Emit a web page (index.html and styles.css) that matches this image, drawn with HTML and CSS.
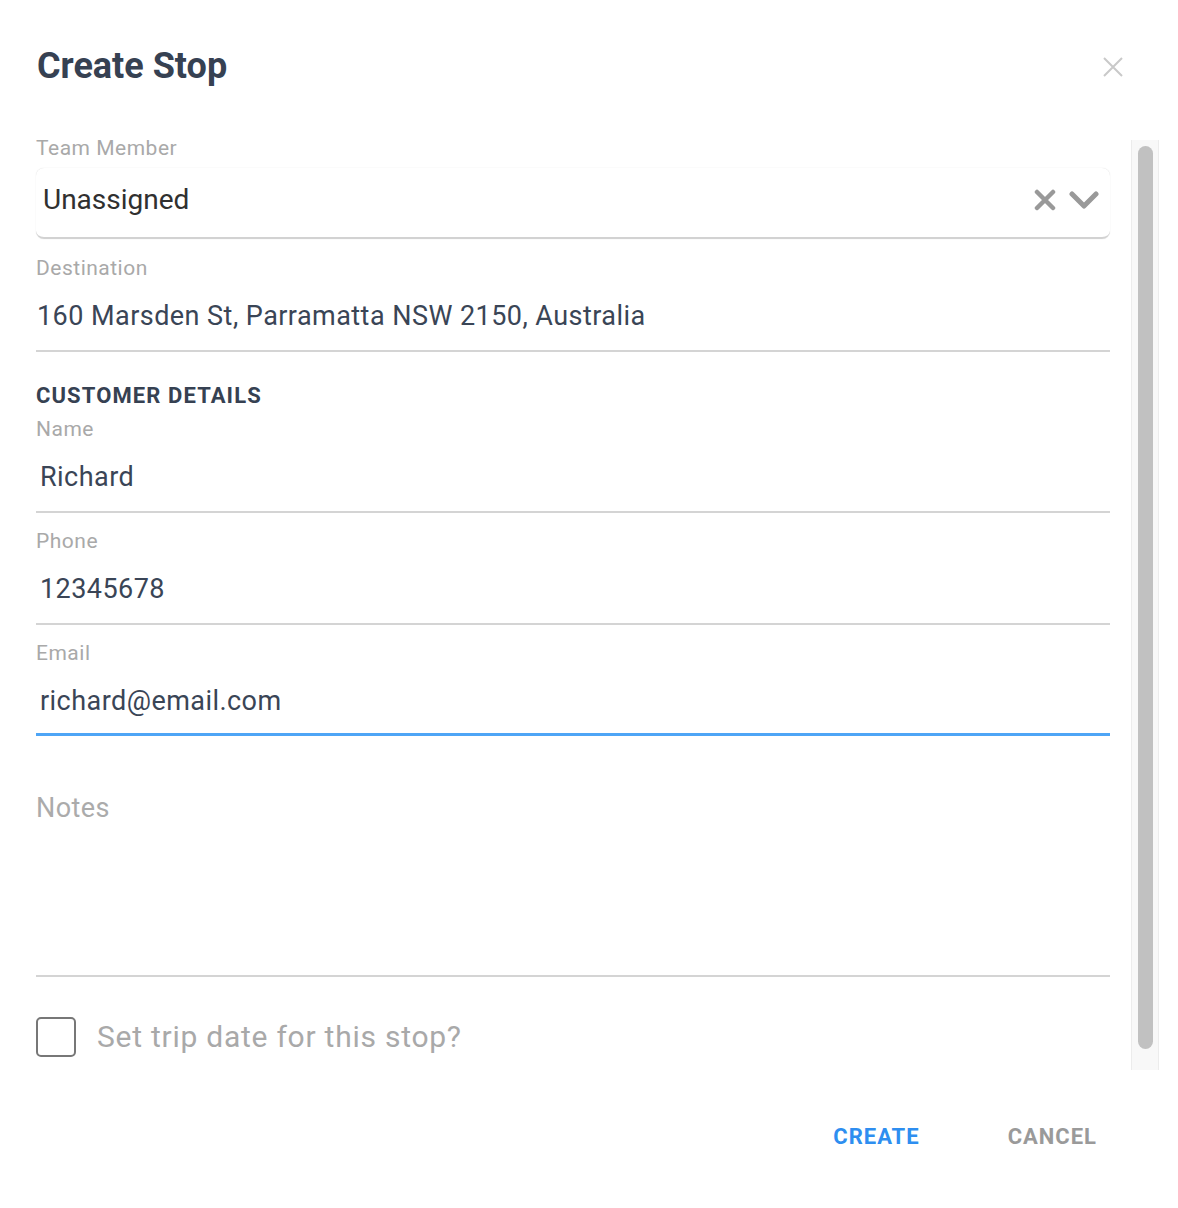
FILE: index.html
```html
<!DOCTYPE html>
<html>
<head>
<meta charset="utf-8">
<title>Create Stop</title>
<link rel="stylesheet" href="styles.css">
</head>
<body>
<div class="dialog">
  <div class="header">
    <h1 class="title">Create Stop</h1>
    <button class="close" aria-label="Close">
      <svg width="20" height="20" viewBox="0 0 20 20"><path d="M1 1 L19 19 M19 1 L1 19" stroke="#c9c9c9" stroke-width="2" fill="none"/></svg>
    </button>
  </div>
  <div class="body">
    <div class="content">
      <div class="label">Team Member</div>
      <div class="select">
        <span class="select-value">Unassigned</span>
        <span class="select-icons">
          <svg width="22" height="22" viewBox="0 0 22 22"><path d="M3 3 L19 19 M19 3 L3 19" stroke="#999" stroke-width="4.5" stroke-linecap="round" fill="none"/></svg>
          <svg width="30" height="20" viewBox="0 0 30 20"><path d="M3 4 L15 16 L27 4" stroke="#999" stroke-width="5" stroke-linecap="round" stroke-linejoin="round" fill="none"/></svg>
        </span>
      </div>

      <div class="label mt17">Destination</div>
      <div class="field dest">160 Marsden St, Parramatta NSW 2150, Australia</div>

      <div class="section">CUSTOMER DETAILS</div>
      <div class="label mt7">Name</div>
      <div class="field">Richard</div>

      <div class="label mt16">Phone</div>
      <div class="field">12345678</div>

      <div class="label mt16">Email</div>
      <div class="field focused">richard@email.com</div>

      <div class="notes">Notes</div>

      <label class="check">
        <span class="box"></span>
        <span class="check-text">Set trip date for this stop?</span>
      </label>
    </div>
    <div class="scrollbar"><div class="thumb"></div></div>
  </div>
  <div class="footer">
    <button class="btn create">CREATE</button>
    <button class="btn cancel">CANCEL</button>
  </div>
</div>
</body>
</html>
```

FILE: styles.css
```css
* { box-sizing: border-box; }
html, body { margin: 0; padding: 0; background: #fff; }
body { font-family: Roboto, "Noto Sans", Arial, sans-serif; width: 1178px; height: 1208px; overflow: hidden; }

.dialog { display: flex; flex-direction: column; height: 1208px; }

.header {
  height: 136px;
  display: flex;
  align-items: flex-start;
  justify-content: space-between;
  padding: 44px 55px 0 37px;
}
.title {
  margin: 0;
  font-size: 36px;
  line-height: 44px;
  font-weight: 700;
  color: #364152;
}
.close {
  border: 0; background: none; padding: 0; margin-top: 13px;
  width: 20px; height: 20px; display: block;
}
.close svg { display: block; }

.body {
  height: 934px;
  display: flex;
  padding-left: 36px;
  padding-right: 19px;
  gap: 21px;
}
.content { flex: 1; }

.scrollbar {
  width: 28px;
  margin-top: 4px;
  height: 930px;
  background: #f8f8f8;
  border-left: 1px solid #ececec;
  border-right: 1px solid #ececec;
  padding: 6px 5px 0 6px;
}
.thumb {
  width: 15px;
  height: 903px;
  background: #c1c1c1;
  border-radius: 8px;
}

.label {
  font-size: 21px;
  line-height: 24px;
  letter-spacing: 0.5px;
  color: #a9a9a9;
}
.mt17 { margin-top: 17px; }
.mt16 { margin-top: 16px; }
.mt7 { margin-top: 7px; }

.select {
  margin-top: 8px;
  display: flex;
  align-items: center;
  justify-content: space-between;
  padding: 14px 11px 19px 7px;
  border-radius: 8px;
  box-shadow: 0 0 1px rgba(0,0,0,0.18);
  border-bottom: 2px solid #d2d2d2;
}
.select-value {
  font-size: 28px;
  line-height: 36px;
  color: #303030;
}
.select-icons { display: flex; align-items: center; gap: 13px; }
.select-icons svg { display: block; }

.field {
  margin-top: 18px;
  font-size: 27px;
  line-height: 36px;
  letter-spacing: 0.45px;
  color: #3a4556;
  padding: 0 0 16px 4px;
  border-bottom: 2px solid #d4d4d4;
}
.field.dest { padding-left: 1px; }
.field.focused {
  padding-bottom: 14px;
  border-bottom: 3px solid #4ea5f6;
}

.section {
  margin-top: 30px;
  font-size: 22px;
  line-height: 28px;
  font-weight: 700;
  letter-spacing: 1.1px;
  color: #364152;
}

.notes {
  margin-top: 54px;
  height: 187px;
  font-size: 27px;
  line-height: 36px;
  letter-spacing: 0.4px;
  color: #ababab;
  border-bottom: 2px solid #d4d4d4;
}

.check {
  margin-top: 40px;
  display: flex;
  align-items: center;
  gap: 21px;
}
.box {
  width: 40px; height: 40px;
  border: 2px solid #777;
  border-radius: 5px;
}
.check-text {
  font-size: 30px;
  line-height: 38px;
  letter-spacing: 0.75px;
  color: #a9a9a9;
}

.footer {
  flex: 1;
  display: flex;
  justify-content: flex-end;
  align-items: flex-start;
  padding: 53px 81px 0 0;
  gap: 88px;
}
.btn {
  border: 0; background: none; padding: 0;
  font-family: inherit;
  font-size: 22px;
  line-height: 28px;
  font-weight: 700;
  letter-spacing: 1px;
}
.create { color: #2e8ef0; }
.cancel { color: #9a9a9a; }
```
